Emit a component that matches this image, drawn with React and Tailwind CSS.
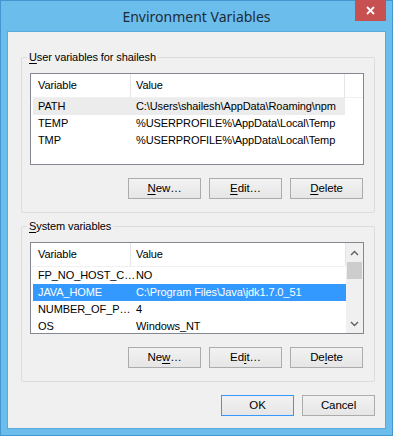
import React from 'react';

const userVars = [
  { name: 'PATH', value: 'C:\\Users\\shailesh\\AppData\\Roaming\\npm', hover: true },
  { name: 'TEMP', value: '%USERPROFILE%\\AppData\\Local\\Temp' },
  { name: 'TMP', value: '%USERPROFILE%\\AppData\\Local\\Temp' },
];

const systemVars = [
  { name: 'FP_NO_HOST_C…', value: 'NO' },
  { name: 'JAVA_HOME', value: 'C:\\Program Files\\Java\\jdk1.7.0_51', selected: true },
  { name: 'NUMBER_OF_P…', value: '4' },
  { name: 'OS', value: 'Windows_NT' },
];

// label with one underlined access-key letter
const Key = ({ text, at }) => (
  <>
    {text.slice(0, at)}
    <span className="underline underline-offset-2">{text[at]}</span>
    {text.slice(at + 1)}
  </>
);

const Button = ({ children, primary }) => (
  <button
    className={
      'h-[21px] w-[73px] bg-gradient-to-b from-[#f2f2f2] to-[#e6e6e6] text-[11.5px] leading-none text-black ' +
      (primary ? 'border border-[#3399ff]' : 'border border-[#acacac]')
    }
  >
    {children}
  </button>
);

const Chevron = ({ up }) => (
  <svg width="9" height="6" viewBox="0 0 9 6" fill="none" stroke="#606060" strokeWidth="1.4">
    {up ? <polyline points="1,5 4.5,1.5 8,5" /> : <polyline points="1,1 4.5,4.5 8,1" />}
  </svg>
);

const VarList = ({ rows, scroll }) => (
  <div className="flex h-[92px] overflow-hidden border border-[#828790] bg-white">
    <div className="flex min-w-0 flex-1 flex-col">
      <div className="flex h-[24px] shrink-0 items-center border-b border-[#f0f0f0]">
        <div className="flex h-full w-[100px] items-center border-r border-[#e5e5e5] pl-[7px]">Variable</div>
        <div className="flex h-full flex-1 items-center border-r border-[#e5e5e5] pl-[5px]">Value</div>
        {!scroll && <div className="w-[18px]" />}
      </div>
      {rows.map((r) => (
        <div key={r.name} className={'flex h-[17px] shrink-0 items-center ' + (scroll ? '' : 'mr-[18px]')}>
          <div
            className={
              'ml-[2px] flex h-full min-w-0 flex-1 items-center ' +
              (r.selected ? 'bg-[#3399ff] text-white' : r.hover ? 'bg-[#ececec]' : '')
            }
          >
            <span className="w-[98px] shrink-0 pl-[5px] whitespace-nowrap">{r.name}</span>
            <span className="pl-[5px] whitespace-nowrap">{r.value}</span>
          </div>
        </div>
      ))}
    </div>
    {scroll && (
      <div className="flex w-[17px] shrink-0 flex-col items-center bg-[#f0f0f0]">
        <div className="flex h-[19px] w-full items-center justify-center">
          <Chevron up />
        </div>
        <div className="h-[17px] w-[15px] bg-[#cdcdcd]" />
        <div className="flex-1" />
        <div className="flex h-[18px] w-full items-center justify-center">
          <Chevron />
        </div>
      </div>
    )}
  </div>
);

const Group = ({ legend, rows, scroll, keys, className }) => (
  <fieldset
    className={
      'ml-[13px] mr-[10px] min-w-0 rounded-[2px] border border-[#dcdcdc] pl-[8px] pr-[10px] pb-[13px] ' + className
    }
  >
    <legend className="ml-[-3px] px-[2px] leading-[16px]">{legend}</legend>
    <div className="mt-[8px]">
      <VarList rows={rows} scroll={scroll} />
    </div>
    <div className="mt-[13px] flex justify-end gap-[8px] pr-[1px]">
      <Button>{keys[0]}</Button>
      <Button>{keys[1]}</Button>
      <Button>{keys[2]}</Button>
    </div>
  </fieldset>
);

export default function App() {
  return (
    <div className="h-[437px] w-[394px] bg-white" style={{ fontFamily: '"Liberation Sans", Arial, sans-serif' }}>
      <div className="flex h-[436px] w-[393px] flex-col border border-[#4595d0] bg-[#6bbdec] px-[6px] pb-[6px]">
        <div className="relative flex h-[30px] shrink-0 items-center justify-center">
          <span className="font-['Noto_Sans',sans-serif] text-[14px] text-[#1d2b36]">Environment Variables</span>
          <div className="absolute right-0 top-[-1px] flex h-[21px] w-[31px] items-center justify-center bg-[#c75050]">
            <svg width="9" height="9" viewBox="0 0 9 9" stroke="white" strokeWidth="1.8">
              <line x1="1" y1="1" x2="8" y2="8" />
              <line x1="8" y1="1" x2="1" y2="8" />
            </svg>
          </div>
        </div>
        <div className="flex flex-1 flex-col border border-[#5aa9de] bg-[#f0f0f0] text-[11px] tracking-[-0.1px] text-black">
          <Group
            className="mt-[17px]"
            legend={<Key text="User variables for shailesh" at={0} />}
            rows={userVars}
            keys={[<Key text="New…" at={0} />, <Key text="Edit…" at={0} />, <Key text="Delete" at={0} />]}
          />
          <Group
            className="mt-[5px]"
            legend={<Key text="System variables" at={0} />}
            rows={systemVars}
            scroll
            keys={[<Key text="New…" at={2} />, <Key text="Edit…" at={2} />, <Key text="Delete" at={2} />]}
          />
          <div className="mr-[10px] mt-[13px] flex justify-end gap-[8px]">
            <Button primary>OK</Button>
            <Button>Cancel</Button>
          </div>
        </div>
      </div>
    </div>
  );
}
